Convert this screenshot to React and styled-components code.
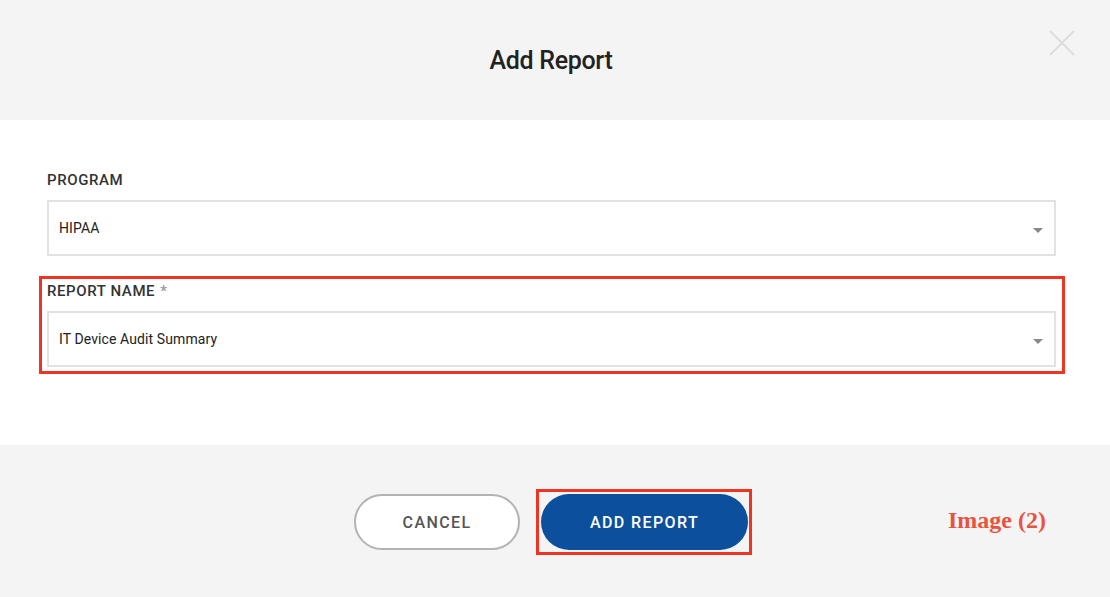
import styled, { createGlobalStyle } from "styled-components";

const GlobalStyle = createGlobalStyle`
  html, body {
    margin: 0;
    padding: 0;
    background: #ffffff;
    font-family: Roboto, "Liberation Sans", sans-serif;
  }
  * {
    box-sizing: border-box;
  }
`;

const Modal = styled.div`
  width: 1110px;
  height: 597px;
  display: flex;
  flex-direction: column;
  position: relative;
`;

const Header = styled.div`
  height: 120px;
  background-color: #f4f4f4;
  display: flex;
  align-items: center;
  justify-content: center;
  padding-right: 8px;
  position: relative;
`;

const Title = styled.h2`
  margin: 0;
  font-size: 25px;
  font-weight: 500;
  color: #222;
  letter-spacing: -0.3px;
`;

const CloseButton = styled.button`
  position: absolute;
  top: 28px;
  right: 33px;
  width: 30px;
  height: 30px;
  padding: 0;
  border: none;
  background: none;
  cursor: pointer;
  svg {
    display: block;
  }
`;

const Body = styled.div`
  background-color: #fff;
  padding: 50px 54px 71px 47px;
  display: flex;
  flex-direction: column;
`;

const Field = styled.div`
  display: flex;
  flex-direction: column;
`;

const Highlight = styled.div`
  margin: 20px -9px 0 -8px;
  padding: 2px 6px 4px 5px;
  border: 3px solid #ee3524;
`;

const Label = styled.label`
  font-size: 15px;
  font-weight: 500;
  line-height: 20px;
  color: #333;
  letter-spacing: 0.6px;
  text-transform: uppercase;
  margin-bottom: 10px;
  span {
    color: #999;
    margin-left: 5px;
  }
`;

const Select = styled.div`
  height: 56px;
  border: 2px solid #e2e2e2;
  background: #fff;
  display: flex;
  align-items: center;
  justify-content: space-between;
  padding: 0 11px 0 10px;
  font-size: 14px;
  letter-spacing: 0.1px;
  color: #222;
`;

const Arrow = styled.span`
  width: 0;
  height: 0;
  border-left: 5px solid transparent;
  border-right: 5px solid transparent;
  border-top: 5px solid #888;
  margin-top: 4px;
`;

const Footer = styled.div`
  flex: 1;
  background-color: #f4f4f4;
  display: flex;
  justify-content: center;
  align-items: flex-start;
  padding: 44px 4px 0 0;
  gap: 16px;
`;

const Button = styled.button`
  height: 56px;
  width: ${(props) => (props.primary ? "207px" : "166px")};
  margin-top: ${(props) => (props.primary ? "0" : "5px")};
  border-radius: 28px;
  font-family: Roboto, "Liberation Sans", sans-serif;
  font-size: 16px;
  font-weight: 500;
  letter-spacing: 1.4px;
  cursor: pointer;
  border: ${(props) => (props.primary ? "none" : "2px solid #b3b3b3")};
  background-color: ${(props) => (props.primary ? "#0b4f9d" : "#fff")};
  color: ${(props) => (props.primary ? "#fff" : "#555")};
`;

const Marked = styled.div`
  display: flex;
  padding: 2px 1px 2px 2px;
  border: 3px solid #ee3524;
`;

const Note = styled.div`
  position: absolute;
  left: 948px;
  top: 507px;
  font-family: "Liberation Serif", serif;
  font-weight: 700;
  font-size: 24px;
  color: #e8533f;
`;

export default function App() {
  return (
    <>
      <GlobalStyle />
      <Modal>
        <Header>
          <Title>Add Report</Title>
          <CloseButton aria-label="Close">
            <svg width="30" height="30" viewBox="0 0 30 30">
              <path d="M3 3 L27 27 M27 3 L3 27" stroke="#dcdcdc" strokeWidth="2" fill="none" />
            </svg>
          </CloseButton>
        </Header>
        <Body>
          <Field>
            <Label>Program</Label>
            <Select>
              HIPAA
              <Arrow />
            </Select>
          </Field>
          <Highlight>
            <Field>
              <Label>
                Report Name<span>*</span>
              </Label>
              <Select>
                IT Device Audit Summary
                <Arrow />
              </Select>
            </Field>
          </Highlight>
        </Body>
        <Footer>
          <Button>CANCEL</Button>
          <Marked>
            <Button primary>ADD REPORT</Button>
          </Marked>
        </Footer>
        <Note>Image (2)</Note>
      </Modal>
    </>
  );
}
